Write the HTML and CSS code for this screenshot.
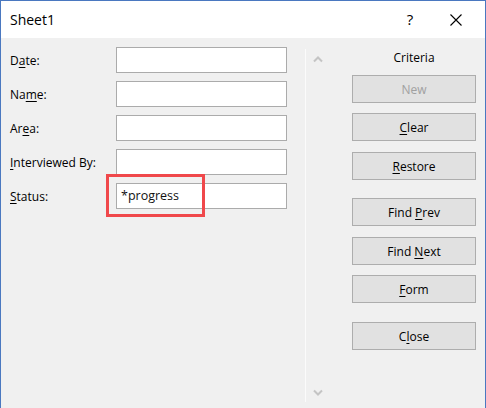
FILE: index.html
```html
<!DOCTYPE html>
<html>
<head>
<meta charset="utf-8">
<link rel="stylesheet" href="styles.css">
</head>
<body>
<div class="window">
  <div class="titlebar">
    <span class="title">Sheet1</span>
    <span class="cap help">?</span>
    <span class="cap close">
      <svg width="12" height="12" viewBox="0 0 12 12"><path d="M0.5 0.5 L11.5 11.5 M11.5 0.5 L0.5 11.5" stroke="#000" stroke-width="1.1" fill="none"/></svg>
    </span>
  </div>
  <div class="body">
    <div class="form">
      <label class="lbl">D<u>a</u>te:</label><div class="field"></div>
      <label class="lbl">Na<u>m</u>e:</label><div class="field"></div>
      <label class="lbl">Ar<u>e</u>a:</label><div class="field"></div>
      <label class="lbl"><u>I</u>nterviewed By:</label><div class="field"></div>
      <label class="lbl"><u>S</u>tatus:</label><div class="field"><span class="value">*progress</span></div>
      <div class="highlight"></div>
    </div>
    <div class="scroll">
      <svg width="10" height="7" viewBox="0 0 10 7"><polyline points="1,5.5 5,1.5 9,5.5" fill="none" stroke="#c4c4c4" stroke-width="2"/></svg>
      <svg width="10" height="7" viewBox="0 0 10 7"><polyline points="1,1.5 5,5.5 9,1.5" fill="none" stroke="#c4c4c4" stroke-width="2"/></svg>
    </div>
    <div class="side">
      <div class="criteria">Criteria</div>
      <div class="btn disabled"><span>New</span></div>
      <div class="btn g10"><span><u>C</u>lear</span></div>
      <div class="btn g11"><span><u>R</u>estore</span></div>
      <div class="btn g18"><span>Find <u>P</u>rev</span></div>
      <div class="btn g11"><span>Find <u>N</u>ext</span></div>
      <div class="btn g10"><span><u>F</u>orm</span></div>
      <div class="btn g19"><span>C<u>l</u>ose</span></div>
    </div>
  </div>
</div>
</body>
</html>
```

FILE: styles.css
```css
html, body {
  margin: 0;
  padding: 0;
}
body {
  width: 486px;
  height: 408px;
  overflow: hidden;
  font-family: "Open Sans", "Noto Sans", sans-serif;
  font-size: 12px;
  color: #000;
}
.window {
  box-sizing: border-box;
  width: 486px;
  height: 408px;
  border: 1px solid #4a78c0;
  border-bottom: none;
  display: flex;
  flex-direction: column;
  background: #f0f0f0;
}
.titlebar {
  height: 37px;
  background: #fff;
  display: flex;
  align-items: center;
  padding-right: 6px;
}
.title {
  padding-left: 9px;
  font-size: 14px;
  flex: 1;
  padding-bottom: 1px;
}
.cap {
  width: 46px;
  height: 37px;
  display: flex;
  align-items: center;
  justify-content: center;
}
.help {
  font-size: 15px;
  padding-bottom: 2px;
  box-sizing: border-box;
}
.close svg {
  display: block;
}
.body {
  flex: 1;
  display: flex;
  align-items: flex-start;
}
.form {
  position: relative;
  width: 295px;
  padding: 9px 0 0 9px;
  display: grid;
  grid-template-columns: 106px 171px;
  grid-auto-rows: 26px;
  row-gap: 8px;
  align-items: center;
}
.lbl {
  line-height: 16px;
  padding-top: 1px;
}
.lbl u, .btn u {
  text-underline-offset: 2px;
  text-decoration-thickness: 1px;
}
.field {
  box-sizing: border-box;
  height: 26px;
  background: #fff;
  border: 1px solid #ababab;
  display: flex;
  align-items: center;
  padding-left: 4px;
}
.value {
  font-size: 12.5px;
  color: #111;
  padding-bottom: 1px;
}
.highlight {
  position: absolute;
  left: 105px;
  top: 136px;
  width: 99px;
  height: 43px;
  box-sizing: border-box;
  border: 3px solid #f0484b;
}
.scroll {
  box-sizing: border-box;
  width: 26px;
  height: 353px;
  margin-top: 11px;
  border-left: 1px solid #fbfbfb;
  padding: 7px 0 6px 7px;
  display: flex;
  flex-direction: column;
  justify-content: space-between;
}
.scroll svg {
  display: block;
}
.side {
  margin-left: auto;
  margin-right: 9px;
  width: 124px;
  padding-top: 11px;
  display: flex;
  flex-direction: column;
}
.criteria {
  text-align: center;
  line-height: 18px;
  margin-bottom: 8px;
}
.btn {
  box-sizing: border-box;
  height: 28px;
  background: #e1e1e1;
  border: 1px solid #adadad;
  display: flex;
  align-items: center;
  justify-content: center;
}
.btn span {
  white-space: pre;
}
.disabled {
  color: #a0a0a0;
}
.g10 { margin-top: 10px; }
.g11 { margin-top: 11px; }
.g18 { margin-top: 18px; }
.g19 { margin-top: 19px; }
```
